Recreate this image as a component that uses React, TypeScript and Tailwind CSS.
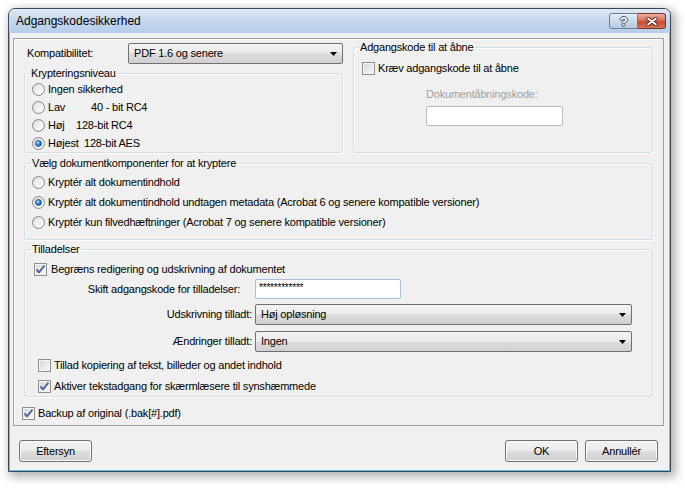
import React from 'react'

function Radio({ checked }: { checked?: boolean }) {
  return (
    <span className="relative flex h-[13px] w-[13px] shrink-0 items-center justify-center rounded-full border border-[#8b8b8b] bg-[linear-gradient(135deg,#d2d2d2,#fdfdfd)]">
      <span className="h-[9px] w-[9px] rounded-full bg-[linear-gradient(135deg,#e2e2e2,#ffffff)]" />
      {checked && (
        <span className="absolute left-[2px] top-[2px] h-[7px] w-[7px] rounded-full border border-[#1d4f8c] bg-[radial-gradient(circle_at_35%_30%,#bfe6ff,#2f8ddc_45%,#0f4f9a)]" />
      )}
    </span>
  )
}

function Check({ checked }: { checked?: boolean }) {
  return (
    <span className="flex h-[13px] w-[13px] shrink-0 items-center justify-center border border-[#8e8f8f] bg-[#f4f4f4]">
      <span className="flex h-[9px] w-[9px] items-center justify-center bg-[linear-gradient(135deg,#d9d9d9,#f7f7f7)]">
        {checked && (
          <svg width="11" height="11" viewBox="0 0 11 11" className="overflow-visible">
            <path d="M1.5 5.5 L4 8.3 L9.5 1.5" fill="none" stroke="#4b61a0" strokeWidth="1.9" strokeLinejoin="round" />
          </svg>
        )}
      </span>
    </span>
  )
}

function Combo({ value, className }: { value: string; className: string }) {
  return (
    <div
      className={`flex h-[21px] items-center rounded-[2px] border border-[#707070] bg-[linear-gradient(#f2f2f2,#ebebeb_50%,#dddddd_50%,#d0d0d0)] pl-[5px] pr-[5px] ${className}`}
    >
      <span className="flex-1 leading-none">{value}</span>
      <svg width="7" height="4" viewBox="0 0 7 4">
        <path d="M0 0h7L3.5 4z" fill="#000" />
      </svg>
    </div>
  )
}

function Button({ label, className = '' }: { label: string; className?: string }) {
  return (
    <div
      className={`flex h-[22px] w-[73px] items-center justify-center rounded-[3px] border border-[#707070] bg-[linear-gradient(#f2f2f2,#ebebeb_50%,#dddddd_50%,#cfcfcf)] shadow-[inset_0_0_0_1px_#fcfcfc] ${className}`}
    >
      {label}
    </div>
  )
}

const group = 'rounded-[3px] border border-[#d5dfe5] shadow-[inset_1px_1px_0_#fff,1px_1px_0_#fff]'

export default function App() {
  return (
    <div className="h-[488px] w-[685px] bg-white pl-[8px] pt-[8px] font-[family-name:Liberation_Sans,Arial,sans-serif] text-[11px] tracking-[-0.2px] text-black">
      <div className="flex h-[464px] w-[663px] flex-col rounded-t-[7px] border border-[#3b4553] bg-[#f0f0f0] shadow-[3px_3px_10px_2px_rgba(0,0,0,0.3)]">
        {/* title bar */}
        <div className="flex h-[24px] shrink-0 rounded-t-[6px] bg-[linear-gradient(#dfe9f5,#c6d8ee_45%,#b5cce8)]">
          <div className="flex-1 pl-[7px] pt-[5px] text-[12px] leading-[15px] tracking-normal">Adgangskodesikkerhed</div>
          <div className="mr-[4px] mt-[4px] flex h-[16px]">
            <div className="flex w-[29px] items-center justify-center rounded-l-[3px] border border-[#6a7d98] bg-[linear-gradient(#e8eff8,#cbd9ea_50%,#b7cae2)] text-[13px] font-bold leading-none text-white [text-shadow:1px_0_#44536a,-1px_0_#44536a,0_1px_#44536a,0_-1px_#44536a]">
              ?
            </div>
            <div className="flex w-[28px] items-center justify-center rounded-r-[3px] border border-l-0 border-[#7a3526] bg-[linear-gradient(#eab0a0,#d26b52_50%,#c4452b_55%,#d8775c)]">
              <svg width="12" height="9" viewBox="0 0 12 9">
                <path d="M2 1.5 L10 7.5 M10 1.5 L2 7.5" stroke="#5b2117" strokeWidth="3.6" strokeLinecap="round" />
                <path d="M2 1.5 L10 7.5 M10 1.5 L2 7.5" stroke="#fff" strokeWidth="1.8" strokeLinecap="round" />
              </svg>
            </div>
          </div>
        </div>

        {/* client area */}
        <div className="flex flex-1 flex-col border-x border-b border-[#5cc6ee] pb-[8px]">
          <div className="ml-[3px] mr-[5px] mt-[5px] border border-[#a0a0a0] px-[10px] pb-[4px] pt-[2px] shadow-[inset_1px_1px_0_#fff]">
            {/* top row */}
            <div className="flex h-[112px] gap-[8px]">
              <div className="w-[321px] pt-[2px]">
                <div className="flex h-[21px] items-center">
                  <span className="w-[104px] pl-[3px]">Kompatibilitet:</span>
                  <Combo value="PDF 1.6 og senere" className="w-[215px]" />
                </div>
                <fieldset className={`${group} mr-[2px] mt-[3px]`}>
                  <legend className="ml-[5px] px-[1px] leading-[13px]">Krypteringsniveau</legend>
                  <div className="flex h-[18px] items-center gap-[3px] pl-[7px]">
                    <Radio />
                    <span>Ingen sikkerhed</span>
                  </div>
                  <div className="flex h-[18px] items-center gap-[3px] pl-[7px]">
                    <Radio />
                    <span className="w-[40px]">Lav</span>
                    <span>40 - bit RC4</span>
                  </div>
                  <div className="flex h-[18px] items-center gap-[3px] pl-[7px]">
                    <Radio />
                    <span className="w-[25px]">Høj</span>
                    <span>128-bit RC4</span>
                  </div>
                  <div className="flex h-[18px] items-center gap-[3px] pl-[7px]">
                    <Radio checked />
                    <span className="w-[33px]">Højest</span>
                    <span>128-bit AES</span>
                  </div>
                </fieldset>
              </div>
              <fieldset className={`${group} h-[112px] flex-1 pl-[8px]`}>
                <legend className="-ml-[3px] px-[1px] leading-[13px]">Adgangskode til at åbne</legend>
                <div className="mt-[6px] flex h-[16px] items-center gap-[3px]">
                  <Check />
                  <span>Kræv adgangskode til at åbne</span>
                </div>
                <div className="ml-[64px] mt-[11px] leading-[14px] text-[#a0a0a0]">Dokumentåbningskode:</div>
                <div className="ml-[64px] mt-[5px] h-[20px] w-[137px] rounded-[2px] border border-[#bcbcbc] bg-white" />
              </fieldset>
            </div>

            {/* components */}
            <fieldset className={`${group} mt-[4px] pb-[7px] pt-[2px]`}>
              <legend className="ml-[6px] px-[1px] leading-[13px]">Vælg dokumentkomponenter for at kryptere</legend>
              <div className="flex h-[20px] items-center gap-[3px] pl-[7px]">
                <Radio />
                <span>Kryptér alt dokumentindhold</span>
              </div>
              <div className="flex h-[20px] items-center gap-[3px] pl-[7px]">
                <Radio checked />
                <span>Kryptér alt dokumentindhold undtagen metadata (Acrobat 6 og senere kompatible versioner)</span>
              </div>
              <div className="flex h-[20px] items-center gap-[3px] pl-[7px]">
                <Radio />
                <span>Kryptér kun filvedhæftninger (Acrobat 7 og senere kompatible versioner)</span>
              </div>
            </fieldset>

            {/* permissions */}
            <fieldset className={`${group} mt-[3px] pb-[2px]`}>
              <legend className="ml-[6px] px-[1px] leading-[13px]">Tilladelser</legend>
              <div className="mt-[5px] flex h-[16px] items-center gap-[4px] pl-[9px]">
                <Check checked />
                <span>Begræns redigering og udskrivning af dokumentet</span>
              </div>
              <div className="mt-[2px] flex h-[20px] items-center">
                <span className="w-[227px] pr-[12px] text-right">Skift adgangskode for tilladelser:</span>
                <div className="ml-[3px] flex h-[20px] w-[146px] items-start rounded-[2px] border border-[#a9bfdc] bg-white pl-[3px] pt-[2px] text-[10px] leading-[12px]">
                  ************
                </div>
              </div>
              <div className="mt-[5px] flex h-[21px] items-center">
                <span className="w-[227px] text-right">Udskrivning tilladt:</span>
                <Combo value="Høj opløsning" className="ml-[3px] w-[377px]" />
              </div>
              <div className="mt-[6px] flex h-[21px] items-center">
                <span className="w-[227px] text-right">Ændringer tilladt:</span>
                <Combo value="Ingen" className="ml-[3px] w-[377px]" />
              </div>
              <div className="mt-[5px] flex h-[16px] items-center gap-[3px] pl-[13px]">
                <Check />
                <span>Tillad kopiering af tekst, billeder og andet indhold</span>
              </div>
              <div className="mt-[5px] flex h-[16px] items-center gap-[3px] pl-[13px]">
                <Check checked />
                <span>Aktiver tekstadgang for skærmlæsere til synshæmmede</span>
              </div>
            </fieldset>

            <div className="-ml-[2px] mt-[8px] flex h-[16px] items-center gap-[3px]">
              <Check checked />
              <span>Backup af original (.bak[#].pdf)</span>
            </div>
          </div>

          {/* buttons */}
          <div className="ml-[9px] mr-[11px] mt-[14px] flex">
            <Button label="Eftersyn" />
            <div className="flex-1" />
            <Button label="OK" />
            <Button label="Annullér" className="ml-[7px]" />
          </div>
        </div>
      </div>
    </div>
  )
}
